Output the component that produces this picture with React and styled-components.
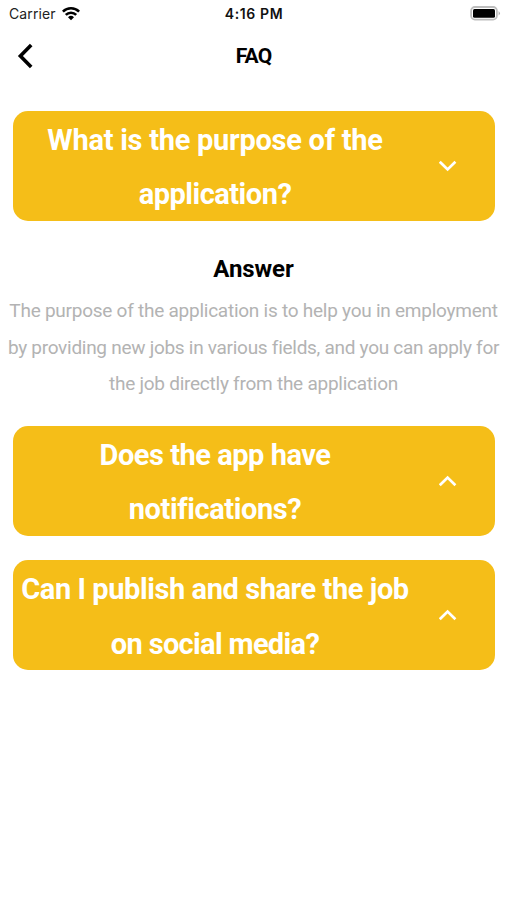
import React, { Component } from 'react';
import styled, { createGlobalStyle } from 'styled-components';

const GlobalStyle = createGlobalStyle`
    body {
        margin: 0;
        background: #fff;
    }
`;

const Screen = styled.div`
    width: 507px;
    height: 900px;
    overflow: hidden;
    background: #fff;
    font-family: Roboto, 'Noto Sans', sans-serif;
    color: #000;
`;

const StatusBar = styled.div`
    display: grid;
    grid-template-columns: 1fr auto 1fr;
    align-items: center;
    height: 27px;
    padding: 0 6px 0 9px;
    font-family: Inter, 'Liberation Sans', sans-serif;
    font-size: 14px;
    line-height: 27px;
`;

const Carrier = styled.div`
    display: flex;
    align-items: center;
    gap: 6px;
    color: #222;
    letter-spacing: 0.1px;
`;

const Time = styled.div`
    font-weight: 600;
    font-size: 14px;
    letter-spacing: 0.6px;
    color: #111;
    margin-right: 2px;
`;

const Battery = styled.svg`
    justify-self: end;
`;

const Header = styled.header`
    display: grid;
    grid-template-columns: 1fr auto 1fr;
    align-items: center;
    height: 58px;
    padding: 0 17px;
`;

const BackButton = styled.button`
    display: flex;
    justify-self: start;
    padding: 0;
    border: 0;
    background: none;
    cursor: pointer;
`;

const Title = styled.h1`
    margin: 0;
    font-size: 21px;
    font-weight: 700;
    line-height: 30px;
    letter-spacing: -0.8px;
`;

const List = styled.main`
    padding: 26px 12.5px 0 13px;
`;

const Question = styled.button`
    display: flex;
    align-items: center;
    width: 100%;
    height: 109.5px;
    margin: 0 0 24.8px;
    padding: 0;
    border: 0;
    border-radius: 15px;
    background: #f5be18;
    color: #fff;
    font-family: inherit;
    font-size: 29px;
    font-weight: 700;
    line-height: 54.5px;
    text-align: center;
    cursor: pointer;
`;

const QuestionText = styled.span`
    flex: 0 0 404px;
    margin-right: 22px;
    padding-top: 3px;
`;

const Line = styled.span`
    display: block;
    white-space: nowrap;
    letter-spacing: ${props => props.$spacing || 0}px;
`;

const Answer = styled.section`
    margin: 0 -12.5px 23.5px -13px;
    text-align: center;
`;

const AnswerTitle = styled.h2`
    margin: 0;
    font-size: 24px;
    font-weight: 700;
    line-height: 48px;
    letter-spacing: -0.1px;
`;

const AnswerText = styled.p`
    margin: 0;
    color: #b3b3b3;
    font-size: 19px;
    font-weight: 400;
    line-height: 36.4px;
`;

const FAQ = [
    {
        id: 'purpose',
        question: [
            ['What is the purpose of the', -0.26],
            ['application?', -0.5]
        ],
        answer: [
            ['The purpose of the application is to help you in employment', -0.25],
            ['by providing new jobs in various fields, and you can apply for', -0.28],
            ['the job directly from the application', -0.25]
        ]
    },
    {
        id: 'notifications',
        question: [
            ['Does the app have', -0.47],
            ['notifications?', -0.4]
        ]
    },
    {
        id: 'share',
        question: [
            ['Can I publish and share the job', -0.42],
            ['on social media?', -0.67]
        ]
    }
];

const Lines = ({ lines }) =>
    lines.map(([text, spacing]) => (
        <Line key={text} $spacing={spacing}>
            {text}
        </Line>
    ));

const WifiIcon = () => (
    <svg width="18" height="14" viewBox="0 0 18 14">
        <g fill="none" stroke="#000" strokeWidth="2.6">
            <path d="M0.9 4.6 A11.6 11.6 0 0 1 17.1 4.6" />
            <path d="M3.8 7.9 A7.4 7.4 0 0 1 14.2 7.9" />
        </g>
        <path d="M9 13.2 L6 10.2 A4.5 4.5 0 0 1 12 10.2 Z" />
    </svg>
);

const BatteryIcon = () => (
    <Battery width="31" height="15" viewBox="0 0 31 15">
        <rect x="1.1" y="1" width="25.8" height="12.6" rx="3.8" fill="#fff" stroke="#bdbdbd" strokeWidth="1.8" />
        <rect x="3" y="3" width="22" height="8.8" rx="1.5" />
        <path d="M28.6 5 Q31.2 7.3 28.6 9.6 Z" fill="#aaa" />
    </Battery>
);

const Chevron = ({ open }) => (
    <svg width="18" height="12" viewBox="0 0 18 12" fill="none" stroke="#fff" strokeWidth="2.7">
        <path d={open ? 'M0.8 1.8 L8.6 9.4 L16.4 1.8' : 'M0.8 10.2 L8.6 2.6 L16.4 10.2'} />
    </svg>
);

export default class App extends Component {
    state = { opened: 'purpose' };

    toggle = id =>
        this.setState({ opened: this.state.opened === id ? null : id });

    render() {
        return (
            <Screen>
                <GlobalStyle />
                <StatusBar>
                    <Carrier>
                        Carrier
                        <WifiIcon />
                    </Carrier>
                    <Time>4:16 PM</Time>
                    <BatteryIcon />
                </StatusBar>
                <Header>
                    <BackButton aria-label="Back">
                        <svg width="17" height="26" viewBox="0 0 17 26" fill="none" stroke="#000" strokeWidth="3.6">
                            <path d="M14.2 2 L3.4 13 L14.2 24" />
                        </svg>
                    </BackButton>
                    <Title>FAQ</Title>
                </Header>
                <List>
                    {FAQ.map(({ id, question, answer }) => (
                        <div key={id}>
                            <Question onClick={() => this.toggle(id)}>
                                <QuestionText>
                                    <Lines lines={question} />
                                </QuestionText>
                                <Chevron open={this.state.opened === id} />
                            </Question>
                            {answer && this.state.opened === id && (
                                <Answer>
                                    <AnswerTitle>Answer</AnswerTitle>
                                    <AnswerText>
                                        <Lines lines={answer} />
                                    </AnswerText>
                                </Answer>
                            )}
                        </div>
                    ))}
                </List>
            </Screen>
        );
    }
}
